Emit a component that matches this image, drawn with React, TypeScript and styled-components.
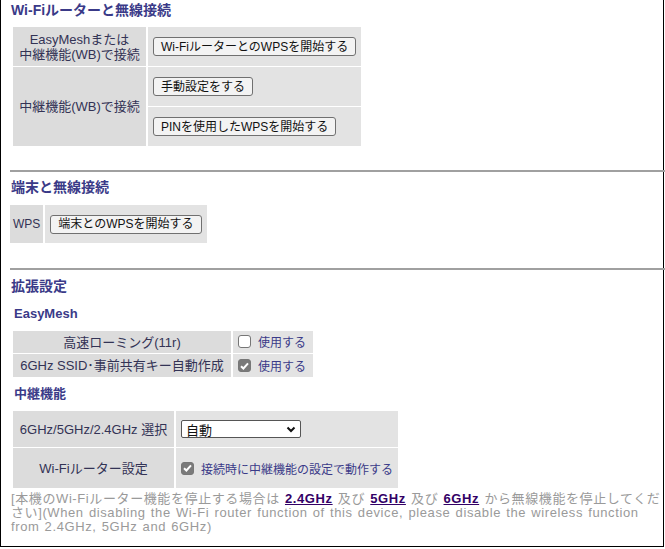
import React from 'react'
import styled, { createGlobalStyle } from 'styled-components'

const GlobalStyle = createGlobalStyle`
  html, body {
    margin: 0;
    padding: 0;
    background: #ffffff;
  }
  body {
    font-family: "Liberation Sans", "Noto Sans CJK JP", sans-serif;
    font-size: 13px;
    color: #333355;
  }
`

const Frame = styled.div`
  border-left: 1px solid #000;
  border-right: 1px solid #000;
  border-bottom: 1px solid #000;
  padding: 0 0 0 9px;
  box-sizing: border-box;
  width: 664px;
  height: 547px;
`

const Heading = styled.h2`
  margin: 0;
  padding-left: 1px;
  font-size: 14px;
  line-height: 20px;
  font-weight: 700;
  color: #3a3a88;
`

const SubHeading = styled.h3`
  margin: 0;
  padding-left: 4px;
  font-size: 13px;
  line-height: 18px;
  font-weight: 700;
  color: #3a3a88;
`

const Rule = styled.hr`
  margin: 0 -3px 0 0;
  border: none;
  border-top: 2px solid #a0a0a0;
  height: 0;
`

const Table = styled.table<{ $indent?: number }>`
  border-collapse: separate;
  border-spacing: 2px 1px;
  margin: -1px 0 -1px ${(p) => p.$indent ?? 1}px;
`

const Label = styled.td<{ $h: number; $w?: number; $compact?: boolean }>`
  background: #dcdcdc;
  height: ${(p) => p.$h}px;
  width: ${(p) => (p.$w ? `${p.$w}px` : 'auto')};
  padding: ${(p) => (p.$compact ? '0 3px' : '0 4px')};
  font-size: ${(p) => (p.$compact ? '12px' : '13px')};
  text-align: center;
  vertical-align: middle;
  line-height: 15px;
  white-space: nowrap;
`

const Value = styled.td<{ $h: number; $w?: number }>`
  background: #e3e3e3;
  height: ${(p) => p.$h}px;
  width: ${(p) => (p.$w ? `${p.$w}px` : 'auto')};
  padding: 0 5px;
  vertical-align: middle;
  white-space: nowrap;
`

const Button = styled.button`
  font-family: "Liberation Sans", "Noto Sans CJK JP", sans-serif;
  font-size: 12px;
  line-height: 14px;
  height: 19px;
  padding: 0 7px;
  color: #111;
  background: #f3f3f3;
  border: 1px solid #707070;
  border-radius: 3px;
  cursor: pointer;
`

const Check = styled.span<{ $on?: boolean }>`
  display: inline-flex;
  align-items: center;
  justify-content: center;
  width: 13px;
  height: 13px;
  border-radius: 3px;
  box-sizing: border-box;
  border: 1px solid ${(p) => (p.$on ? '#777' : '#767676')};
  background: ${(p) => (p.$on ? '#7a7a7a' : '#fff')};
  margin-right: 7px;
`

const CheckLabel = styled.span`
  display: inline-flex;
  align-items: center;
  color: #3a3a88;
  font-size: 12px;
`

const Select = styled.div`
  display: flex;
  align-items: center;
  justify-content: space-between;
  width: 120px;
  height: 18px;
  box-sizing: border-box;
  padding: 0 4px;
  border: 1px solid #555;
  border-radius: 2px;
  background: #fff;
  color: #111;
  font-size: 13px;
`

const Note = styled.p`
  margin: 4px 0 0 1px;
  width: 652px;
  font-family: "Liberation Sans", "Noto Sans CJK JP", sans-serif;
  font-size: 13px;
  letter-spacing: 0.6px;
  word-spacing: 1px;
  line-height: 14px;
  color: #9a9a9a;
`

const Link = styled.a`
  color: #330066;
  text-decoration: underline;
  font-weight: 700;
`

const Spacer = styled.div<{ $h: number }>`
  height: ${(p) => p.$h}px;
`

const Tick = () => (
  <svg width="9" height="8" viewBox="0 0 9 8">
    <path d="M1 4.2 L3.4 6.5 L8 1.3" fill="none" stroke="#fff" strokeWidth="2" />
  </svg>
)

const App: React.FC = () => (
  <>
    <GlobalStyle />
    <Frame>
      <Heading>Wi-Fiルーターと無線接続</Heading>
      <Spacer $h={7} />
      <Table>
        <tbody>
          <tr>
            <Label $h={39} $w={125}>
              EasyMeshまたは
              <br />
              中継機能(WB)で接続
            </Label>
            <Value $h={39} $w={200}>
              <Button>Wi-FiルーターとのWPSを開始する</Button>
            </Value>
          </tr>
          <tr>
            <Label $h={79} rowSpan={2}>
              中継機能(WB)で接続
            </Label>
            <Value $h={39}>
              <Button>手動設定をする</Button>
            </Value>
          </tr>
          <tr>
            <Value $h={39}>
              <Button>PINを使用したWPSを開始する</Button>
            </Value>
          </tr>
        </tbody>
      </Table>
      <Spacer $h={24} />
      <Rule />
      <Spacer $h={5} />
      <Heading>端末と無線接続</Heading>
      <Spacer $h={8} />
      <Table $indent={-2}>
        <tbody>
          <tr>
            <Label $h={38} $compact>
              WPS
            </Label>
            <Value $h={38}>
              <Button>端末とのWPSを開始する</Button>
            </Value>
          </tr>
        </tbody>
      </Table>
      <Spacer $h={25} />
      <Rule />
      <Spacer $h={6} />
      <Heading>拡張設定</Heading>
      <Spacer $h={9} />
      <SubHeading>EasyMesh</SubHeading>
      <Spacer $h={8} />
      <Table>
        <tbody>
          <tr>
            <Label $h={22} $w={210}>
              高速ローミング(11r)
            </Label>
            <Value $h={22} $w={70}>
              <CheckLabel>
                <Check />
                使用する
              </CheckLabel>
            </Value>
          </tr>
          <tr>
            <Label $h={23}>6GHz SSID･事前共有キー自動作成</Label>
            <Value $h={23}>
              <CheckLabel>
                <Check $on>
                  <Tick />
                </Check>
                使用する
              </CheckLabel>
            </Value>
          </tr>
        </tbody>
      </Table>
      <Spacer $h={8} />
      <SubHeading>中継機能</SubHeading>
      <Spacer $h={8} />
      <Table>
        <tbody>
          <tr>
            <Label $h={36} $w={153}>
              6GHz/5GHz/2.4GHz 選択
            </Label>
            <Value $h={36} $w={212}>
              <Select>
                <span>自動</span>
                <svg width="10" height="7" viewBox="0 0 10 7">
                  <path d="M1.5 1.5 L5 5 L8.5 1.5" fill="none" stroke="#111" strokeWidth="2" />
                </svg>
              </Select>
            </Value>
          </tr>
          <tr>
            <Label $h={40}>Wi-Fiルーター設定</Label>
            <Value $h={40}>
              <CheckLabel>
                <Check $on>
                  <Tick />
                </Check>
                接続時に中継機能の設定で動作する
              </CheckLabel>
            </Value>
          </tr>
        </tbody>
      </Table>
      <Note>
        [本機のWi-Fiルーター機能を停止する場合は <Link href="#">2.4GHz</Link> 及び{' '}
        <Link href="#">5GHz</Link> 及び <Link href="#">6GHz</Link>{' '}
        から無線機能を停止してください](When disabling the Wi-Fi router function of this device, please
        disable the wireless function from 2.4GHz, 5GHz and 6GHz)
      </Note>
    </Frame>
  </>
)

export default App
